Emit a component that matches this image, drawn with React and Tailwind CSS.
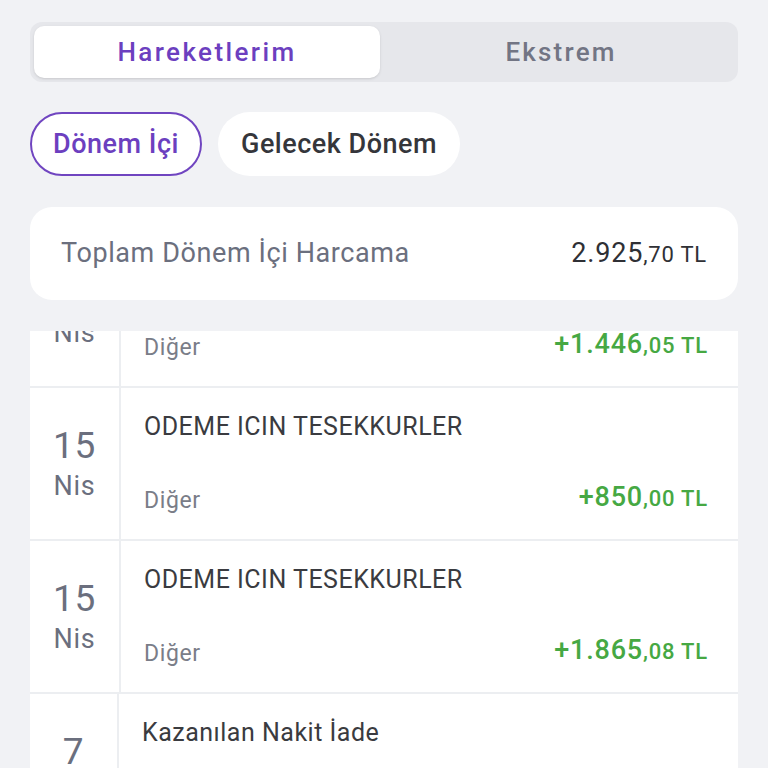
import React from 'react';

const rows = [
  { day: '15', month: 'Nis', title: 'ODEME ICIN TESEKKURLER', cat: 'Diğer', main: '+1.446', dec: ',05 TL' },
  { day: '15', month: 'Nis', title: 'ODEME ICIN TESEKKURLER', cat: 'Diğer', main: '+850', dec: ',00 TL' },
  { day: '15', month: 'Nis', title: 'ODEME ICIN TESEKKURLER', cat: 'Diğer', main: '+1.865', dec: ',08 TL' },
  { day: '7', month: 'Nis', title: 'Kazanılan Nakit İade', cat: 'Diğer', main: '+12', dec: ',40 TL', narrow: true },
];

const Row = ({ row }) => (
  <div className="flex h-[153px] border-b-2 border-[#eceef1] bg-white">
    <div
      className={`flex flex-col items-center justify-center border-r-2 border-[#eceef1] pt-[4px] text-[#6b6f7e] ${
        row.narrow ? 'w-[89px]' : 'w-[91px]'
      }`}
    >
      <span className="text-[37px] leading-[40px] tracking-[0.8px]">{row.day}</span>
      <span className="text-[27px] leading-[40px] tracking-[0.8px]">{row.month}</span>
    </div>
    <div className="flex flex-1 flex-col justify-between pl-[23px] pr-[30px] pt-[24px] pb-[24px]">
      <div className="text-[25px] leading-[30px] text-[#3a3b40] tracking-[0.5px]">{row.title}</div>
      <div className="flex items-end justify-between">
        <span className="text-[23px] leading-[28px] text-[#7a7d88] tracking-[0.6px]">{row.cat}</span>
        <span className="font-medium text-[#46a843] tracking-[0.8px] leading-[28px]">
          <span className="text-[27px]">{row.main}</span>
          <span className="text-[22px]">{row.dec}</span>
        </span>
      </div>
    </div>
  </div>
);

export default function App() {
  return (
    <div
      className="h-[768px] overflow-hidden bg-[#f1f2f5] px-[30px] pt-[22px]"
      style={{ fontFamily: 'Roboto, "Noto Sans", sans-serif' }}
    >
      {/* tabs */}
      <div className="flex h-[60px] rounded-[12px] bg-[#e6e7eb] p-[4px]">
        <div className="flex w-[346px] items-center justify-center rounded-[10px] bg-white text-[26px] font-medium tracking-[2.4px] text-[#6c3fbf] shadow-sm">
          Hareketlerim
        </div>
        <div className="flex flex-1 items-center justify-center pl-[8px] text-[26px] font-medium tracking-[2.2px] text-[#727584]">
          Ekstrem
        </div>
      </div>

      {/* period pills */}
      <div className="mt-[30px] flex gap-[16px]">
        <div className="flex h-[64px] w-[172px] items-center justify-center rounded-full border-2 border-[#7045c0] bg-white text-[27px] font-medium tracking-[0.5px] text-[#6c3fbf]">
          Dönem İçi
        </div>
        <div className="flex h-[64px] w-[242px] items-center justify-center rounded-full bg-white text-[27px] font-medium tracking-[0.5px] text-[#35363b]">
          Gelecek Dönem
        </div>
      </div>

      {/* summary */}
      <div className="mt-[31px] flex h-[93px] items-center justify-between rounded-[22px] bg-white px-[31px]">
        <span className="text-[27px] tracking-[0.6px] text-[#6b6f7e]">Toplam Dönem İçi Harcama</span>
        <span className="text-[#2f3035] tracking-[0.8px]">
          <span className="text-[27px]">2.925</span>
          <span className="text-[22px]">,70 TL</span>
        </span>
      </div>

      {/* list */}
      <div className="mt-[31px] h-[440px] overflow-hidden">
        <div className="-mt-[96px]">
          {rows.map((row, i) => (
            <Row key={i} row={row} />
          ))}
        </div>
      </div>
    </div>
  );
}
